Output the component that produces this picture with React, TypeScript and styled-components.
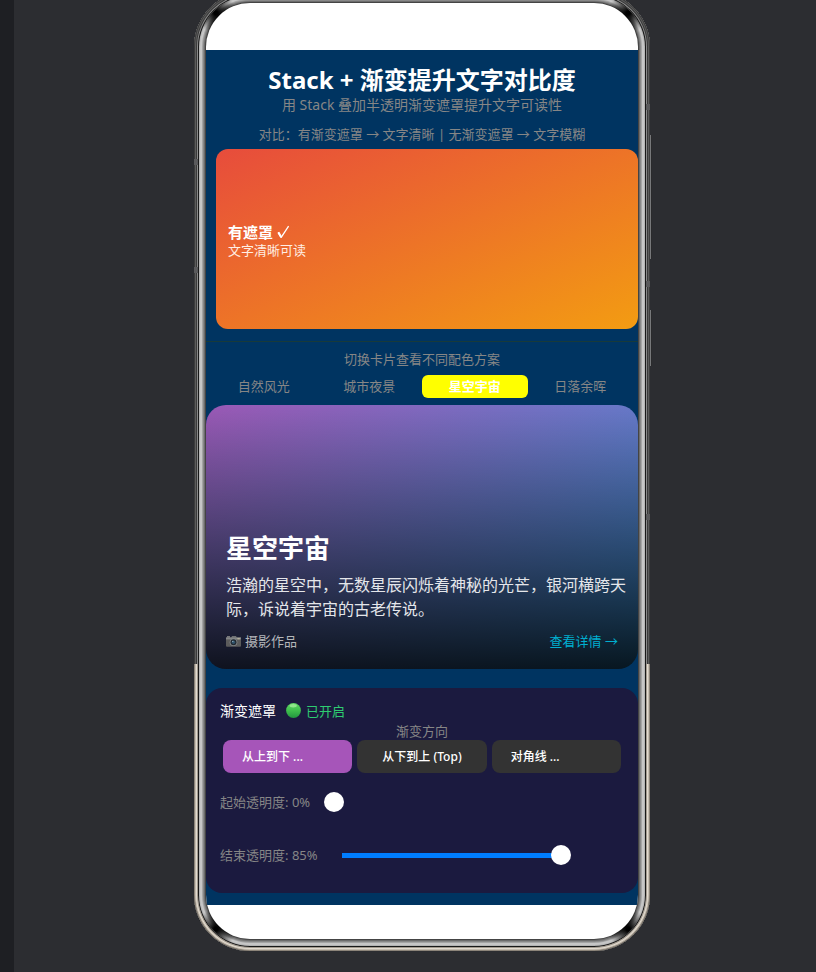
import React, { useState } from 'react';
import styled, { createGlobalStyle } from 'styled-components';

const GlobalStyle = createGlobalStyle`
  * { box-sizing: border-box; }
  body {
    margin: 0;
    background: #2c2d31;
    font-family: "Noto Sans", "Noto Sans CJK SC", sans-serif;
    color: #fff;
  }
  h1, h2, h3, p { margin: 0; }
  button { font-family: inherit; border: 0; padding: 0; cursor: pointer; }
`;

const Page = styled.div`
  display: grid;
  grid-template-columns: 14px 1fr;
  min-height: 100vh;
  overflow: hidden;
`;

const SideStrip = styled.div`
  background: #1e1f23;
`;

const Stage = styled.main`
  display: flex;
  justify-content: center;
  align-items: flex-start;
  padding-left: 14px;
`;

const Phone = styled.div`
  position: relative;
  width: 100%;
  max-width: 456px;
  margin-top: -9px;
  margin-bottom: 21px;
  padding: 12px;
  border-radius: 56px;
  background: #444;
  box-shadow:
    inset 0 0 0 1px #3c3c3c,
    inset 0 0 0 2px #5c5c5c,
    inset 0 0 0 3px #3a3a3a,
    inset 0 0 0 4px #8a8a8a,
    inset 0 0 0 5px #181818,
    inset 0 0 0 6px #b4b4b4,
    inset 0 0 0 8px #c6c6c6,
    inset 0 0 0 9px #a4a4a4,
    inset 0 0 0 10px #888,
    inset 0 0 0 11px #6c6c6c;

  &::before {
    content: '';
    position: absolute;
    inset: 5px;
    border-radius: 51px;
    background:
      radial-gradient(circle at 17px 17px, #000 2px, transparent 20px),
      radial-gradient(circle at calc(100% - 17px) 17px, #000 2px, transparent 20px),
      radial-gradient(circle at 17px calc(100% - 17px), #000 2px, transparent 20px),
      radial-gradient(circle at calc(100% - 17px) calc(100% - 17px), #000 2px, transparent 20px);
  }

  &::after {
    content: '';
    position: absolute;
    inset: 670px 0 0;
    border: 1px solid #8c8479;
    border-top: 0;
    border-radius: 3px 3px 56px 56px;
    box-shadow:
      inset 0 0 0 1px #c4bbae,
      inset 0 0 0 2px #e2dbd0,
      inset 0 0 0 3px #a39a8e;
    clip-path: inset(3px 0 0 0);
  }
`;

const EdgeMark = styled.span<{ $side: 'left' | 'right'; $top: number; $height: number }>`
  position: absolute;
  ${(p) => p.$side}: ${(p) => (p.$height > 10 ? -2 : 0)}px;
  top: ${(p) => p.$top}px;
  width: ${(p) => (p.$height > 10 ? 2 : 4)}px;
  height: ${(p) => p.$height}px;
  border-right: ${(p) => (p.$height > 10 ? '1px solid #2a2a2c' : '0')};
  background: ${(p) => (p.$height > 10 ? '#77787a' : '#5a5a5c')};
`;

const Screen = styled.div`
  position: relative;
  z-index: 1;
  border-radius: 44px;
  overflow: hidden;
  background: #fff;
`;

const StatusArea = styled.div`
  height: 47px;
`;

const NavArea = styled.div`
  height: 34px;
`;

const Content = styled.div`
  background: #003461;
  padding: 16px 0 12px;
`;

const Title = styled.h1`
  font-size: 24px;
  line-height: 28px;
  font-weight: 700;
  text-align: center;
`;

const Subtitle = styled.p`
  font-size: 14px;
  line-height: 22px;
  color: #868686;
  text-align: center;
`;

const Caption = styled.p<{ $top?: number; $bottom?: number }>`
  margin: ${(p) => p.$top ?? 0}px 0 ${(p) => p.$bottom ?? 0}px;
  font-size: 13px;
  line-height: 18px;
  color: #868686;
  text-align: center;
`;

const CompareCard = styled.section`
  display: flex;
  flex-direction: column;
  justify-content: center;
  height: 180px;
  margin-left: 10px;
  padding: 2px 12px 0;
  border-radius: 12px;
  background: linear-gradient(to bottom right, #e74c3c, #f39c12);
`;

const CompareTitle = styled.h2`
  display: flex;
  align-items: center;
  gap: 4px;
  font-size: 15px;
  line-height: 20px;
`;

const CompareText = styled.p`
  font-size: 13px;
  line-height: 16px;
  color: #ffeee4;
`;

const Divider = styled.hr`
  height: 1px;
  margin: 12px 0 8px;
  border: 0;
  background: #183a3a;
`;

const Tabs = styled.div`
  display: grid;
  grid-template-columns: repeat(4, 1fr);
  padding: 0 5px;
  margin-bottom: 7px;
`;

const Tab = styled.button<{ $active: boolean }>`
  height: 23px;
  padding-bottom: 1px;
  border-radius: 6px;
  font-size: 13px;
  line-height: 22px;
  font-weight: ${(p) => (p.$active ? 700 : 400)};
  color: ${(p) => (p.$active ? '#fff' : '#868686')};
  background: ${(p) => (p.$active ? '#ffff00' : 'transparent')};
`;

const Hero = styled.article`
  display: flex;
  flex-direction: column;
  justify-content: flex-end;
  min-height: 264px;
  padding: 20px 20px 19px;
  border-radius: 20px;
  background:
    linear-gradient(to bottom, transparent, rgba(0, 0, 0, 0.85)),
    linear-gradient(to bottom right, #9b59b6, #3498db);
`;

const HeroTitle = styled.h2`
  font-size: 26px;
  line-height: 32px;
`;

const HeroText = styled.p`
  margin: 9px -12px 11px 0;
  font-size: 16px;
  line-height: 24px;
  color: #e4e6ea;
`;

const HeroFooter = styled.footer`
  display: flex;
  justify-content: space-between;
  font-size: 13px;
  line-height: 18px;
  color: #b4b6ba;
`;

const Credit = styled.span`
  display: flex;
  align-items: center;
  gap: 4px;
`;

const DetailLink = styled.a`
  color: #00afd0;
  text-decoration: none;
`;

const Panel = styled.section`
  margin-top: 19px;
  padding: 11px 14px 18px;
  border-radius: 16px;
  background: #1b1a3f;
`;

const ToggleRow = styled.div`
  display: flex;
  align-items: center;
  gap: 10px;
  height: 22px;
  margin-bottom: 2px;
  font-size: 14px;
`;

const ToggleButton = styled.button`
  display: flex;
  align-items: center;
  gap: 5px;
  background: none;
  font-size: 13px;
  color: #2ecc71;
`;

const DirectionLabel = styled.p`
  font-size: 13px;
  line-height: 17px;
  color: #868686;
  text-align: center;
`;

const Directions = styled.div`
  display: grid;
  grid-template-columns: repeat(3, 1fr);
  gap: 5px;
  margin: 0 3px 9px;
`;

const DirectionButton = styled.button<{ $active: boolean; $centered: boolean }>`
  height: 33px;
  padding: 0 19px 2px;
  border-radius: 8px;
  font-size: 12px;
  font-weight: 500;
  white-space: nowrap;
  text-align: ${(p) => (p.$centered ? 'center' : 'left')};
  color: #fff;
  background: ${(p) => (p.$active ? '#a655b9' : '#333')};
`;

const SliderRow = styled.div`
  display: flex;
  align-items: center;
  gap: 14px;
  height: 40px;
  padding-right: 14px;
  font-size: 13px;
  color: #868686;

  & + & { margin-top: 13px; }

  label { padding-bottom: 2px; }
`;

const Range = styled.input<{ $value: number }>`
  appearance: none;
  flex: 1;
  min-width: 0;
  height: 20px;
  margin: 0;
  background: none;

  &::-webkit-slider-runnable-track {
    height: 5px;
    background: linear-gradient(#007dff, #007dff) 10px 0 / calc((100% - 20px) * ${(p) => p.$value / 100}) 100% no-repeat;
  }

  &::-webkit-slider-thumb {
    appearance: none;
    width: 20px;
    height: 20px;
    margin-top: -8px;
    border-radius: 50%;
    background: #fff;
  }
`;

const CheckIcon = () => (
  <svg width="13" height="14" viewBox="0 0 13 14" fill="none" stroke="#fff" strokeLinejoin="round" aria-label="✓">
    <path d="M1.2 7.2 4.2 12.4 11.6 1.2" strokeWidth="1.3" />
    <path d="M1.4 7.4 4.2 12.2" strokeWidth="2.1" />
  </svg>
);

const CameraIcon = () => (
  <svg width="15" height="11" viewBox="0 0 15 11" aria-hidden="true">
    <rect x="1" y="0" width="3" height="2" fill="#77797b" />
    <path d="M5 2 6 0h4l1 2z" fill="#6f7173" />
    <rect x="0" y="1.4" width="15" height="9.4" rx="1" fill="#5b5b5b" />
    <rect x="0" y="1.4" width="15" height="2" fill="#858788" />
    <rect x="11.4" y="2" width="2.4" height="1.4" fill="#b3b09c" />
    <circle cx="7.5" cy="6.2" r="3.8" fill="#85898c" />
    <circle cx="7.5" cy="6.2" r="3" fill="#20282f" />
    <circle cx="7.5" cy="6.2" r="1.7" fill="#31536b" />
    <circle cx="6.8" cy="5.4" r="0.6" fill="#9dbccc" />
  </svg>
);

const GreenDot = () => (
  <svg width="15" height="15" viewBox="0 0 15 15" aria-hidden="true">
    <defs>
      <linearGradient id="dot" x1="0" y1="0" x2="0" y2="1">
        <stop offset="0" stopColor="#5fd864" />
        <stop offset="0.5" stopColor="#3fbf4d" />
        <stop offset="1" stopColor="#22973f" />
      </linearGradient>
    </defs>
    <circle cx="7.5" cy="7.5" r="7.4" fill="url(#dot)" />
    <ellipse cx="7.2" cy="2.8" rx="3.6" ry="1.7" fill="#a5ef9c" opacity="0.75" />
  </svg>
);

const tabs = ['自然风光', '城市夜景', '星空宇宙', '日落余晖'];
const directions = ['从上到下 ...', '从下到上 (Top)', '对角线 ...'];

export default function App() {
  const [tab, setTab] = useState(2);
  const [direction, setDirection] = useState(0);
  const [start, setStart] = useState(0);
  const [end, setEnd] = useState(85);

  return (
    <>
      <GlobalStyle />
      <Page>
        <SideStrip />
        <Stage>
          <Phone>
            <EdgeMark $side="left" $top={168} $height={6} />
            <EdgeMark $side="left" $top={276} $height={6} />
            <EdgeMark $side="right" $top={113} $height={6} />
            <EdgeMark $side="right" $top={144} $height={124} />
            <EdgeMark $side="right" $top={290} $height={6} />
            <EdgeMark $side="right" $top={319} $height={56} />
            <EdgeMark $side="right" $top={523} $height={6} />
            <Screen>
              <StatusArea />
              <Content>
                <Title>Stack + 渐变提升文字对比度</Title>
                <Subtitle>用 Stack 叠加半透明渐变遮罩提升文字可读性</Subtitle>
                <Caption $top={9} $bottom={6}>
                  对比：有渐变遮罩 → 文字清晰 | 无渐变遮罩 → 文字模糊
                </Caption>
                <CompareCard>
                  <CompareTitle>
                    有遮罩 <CheckIcon />
                  </CompareTitle>
                  <CompareText>文字清晰可读</CompareText>
                </CompareCard>
                <Divider />
                <Caption $bottom={7}>切换卡片查看不同配色方案</Caption>
                <Tabs role="tablist">
                  {tabs.map((name, i) => (
                    <Tab key={name} role="tab" aria-selected={i === tab} $active={i === tab} onClick={() => setTab(i)}>
                      {name}
                    </Tab>
                  ))}
                </Tabs>
                <Hero>
                  <HeroTitle>星空宇宙</HeroTitle>
                  <HeroText>浩瀚的星空中，无数星辰闪烁着神秘的光芒，银河横跨天际，诉说着宇宙的古老传说。</HeroText>
                  <HeroFooter>
                    <Credit>
                      <CameraIcon />
                      摄影作品
                    </Credit>
                    <DetailLink href="#detail">查看详情 →</DetailLink>
                  </HeroFooter>
                </Hero>
                <Panel>
                  <ToggleRow>
                    <span>渐变遮罩</span>
                    <ToggleButton aria-pressed="true">
                      <GreenDot />
                      已开启
                    </ToggleButton>
                  </ToggleRow>
                  <DirectionLabel>渐变方向</DirectionLabel>
                  <Directions>
                    {directions.map((name, i) => (
                      <DirectionButton
                        key={name}
                        $active={i === direction}
                        $centered={i === 1}
                        onClick={() => setDirection(i)}
                      >
                        {name}
                      </DirectionButton>
                    ))}
                  </Directions>
                  <SliderRow>
                    <label htmlFor="start">起始透明度: {start}%</label>
                    <Range id="start" type="range" value={start} $value={start} onChange={(e) => setStart(+e.target.value)} />
                  </SliderRow>
                  <SliderRow>
                    <label htmlFor="end">结束透明度: {end}%</label>
                    <Range id="end" type="range" value={end} $value={end} onChange={(e) => setEnd(+e.target.value)} />
                  </SliderRow>
                </Panel>
              </Content>
              <NavArea />
            </Screen>
          </Phone>
        </Stage>
      </Page>
    </>
  );
}
